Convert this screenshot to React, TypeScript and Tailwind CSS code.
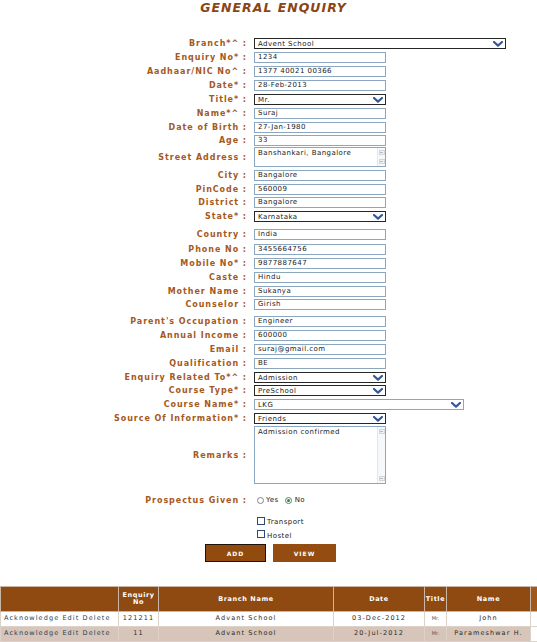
import React from 'react';

const labelCls = 'w-[247px] shrink-0 text-right text-[8px] font-bold text-[#a5591b] leading-[11px] tracking-[0.95px]';
const font = { fontFamily: '"DejaVu Sans", Verdana, sans-serif' };

function Chevron({ color = '#34589a' }: { color?: string }) {
  return (
    <svg width="10" height="6" viewBox="0 0 10 6" className="shrink-0">
      <path d="M1 1 L5 4.6 L9 1" fill="none" stroke={color} strokeWidth="2.2" strokeLinecap="round" strokeLinejoin="round" />
    </svg>
  );
}

function Row({ label, children, className = '' }: { label: string; children: React.ReactNode; className?: string }) {
  return (
    <div className={`flex items-center ${className}`}>
      <div className={labelCls}>{label} :</div>
      <div className="ml-[7px] flex items-center">{children}</div>
    </div>
  );
}

function TextBox({ value, w = 'w-[132px]' }: { value: string; w?: string }) {
  return (
    <div className={`${w} h-[11px] border border-[#8aa6c1] bg-white px-[3px] text-[7px] leading-[9px] tracking-[0.45px] text-[#222] whitespace-nowrap overflow-hidden`}>
      {value}
    </div>
  );
}

function SelectBox({ value, w = 'w-[132px]', light = false }: { value: string; w?: string; light?: boolean }) {
  return (
    <div
      className={`${w} h-[11px] flex items-center justify-between bg-white pl-[3px] pr-[2px] text-[7px] leading-[8px] tracking-[0.45px] text-[#222] ${
        light ? 'border border-[#8aa6c1]' : 'border-[1.5px] border-[#262626]'
      }`}
    >
      <span>{value}</span>
      <Chevron />
    </div>
  );
}

function Scrollbar() {
  return (
    <div className="w-[8px] h-full flex flex-col justify-between items-center py-[2px] border-l border-[#e4e8ee] bg-[#f7f8fa]">
      <div className="w-[6px] h-[5px] border border-[#cfd6de] bg-[#eef1f5] flex items-center justify-center">
        <div className="w-[3px] h-[1px] bg-[#b4bcc6]" />
      </div>
      <div className="w-[6px] h-[5px] border border-[#cfd6de] bg-[#eef1f5] flex items-center justify-center">
        <div className="w-[3px] h-[1px] bg-[#b4bcc6]" />
      </div>
    </div>
  );
}

function TextArea({ value, h }: { value: string; h: string }) {
  return (
    <div className={`w-[132px] ${h} border border-[#8aa6c1] bg-white flex`}>
      <div className="flex-1 px-[3px] pt-[1px] text-[7px] leading-[9px] tracking-[0.45px] text-[#222] whitespace-nowrap overflow-hidden">{value}</div>
      <Scrollbar />
    </div>
  );
}

const headers = [
  { t: '', w: 'w-[118px]' },
  { t: 'Enquiry No', w: 'w-[40px]' },
  { t: 'Branch Name', w: 'w-[175px]' },
  { t: 'Date', w: 'w-[91px]' },
  { t: 'Title', w: 'w-[22px]' },
  { t: 'Name', w: 'w-[84px]' },
  { t: '', w: 'w-[7px]' },
];

const rows = [
  { no: '121211', branch: 'Advant School', date: '03-Dec-2012', title: 'Mr.', name: 'John', bg: 'bg-white' },
  { no: '11', branch: 'Advant School', date: '20-Jul-2012', title: 'Mr.', name: 'Parameshwar H.', bg: 'bg-[#d6c5b8]' },
];

const cell = 'p-0 border border-[#ddd2c8] text-center text-[#2a2a2a] whitespace-nowrap overflow-hidden';

export default function App() {
  return (
    <div className="w-[537px] h-[642px] bg-white overflow-hidden" style={font}>
      <h1 className="pl-[10px] pt-[1px] text-center text-[12.5px] leading-[13px] font-bold italic tracking-[1px] text-[#8b4513]">
        GENERAL ENQUIRY
      </h1>

      <div className="mt-[24px] flex flex-col gap-[3px]">
        <Row label="Branch*^">
          <SelectBox value="Advent School" w="w-[252px]" />
        </Row>
        <Row label="Enquiry No*">
          <TextBox value="1234" />
        </Row>
        <Row label="Aadhaar/NIC No^">
          <TextBox value="1377 40021 00366" />
        </Row>
        <Row label="Date*">
          <TextBox value="28-Feb-2013" />
        </Row>
        <Row label="Title*">
          <SelectBox value="Mr." />
        </Row>
        <Row label="Name*^">
          <TextBox value="Suraj" />
        </Row>
        <Row label="Date of Birth">
          <TextBox value="27-Jan-1980" />
        </Row>
        <Row label="Age" className="-mt-[1px]">
          <TextBox value="33" />
        </Row>
        <Row label="Street Address" className="-mt-[2px]">
          <TextArea value="Banshankari,  Bangalore" h="h-[20px]" />
        </Row>
        <Row label="City">
          <TextBox value="Bangalore" />
        </Row>
        <Row label="PinCode">
          <TextBox value="560009" />
        </Row>
        <Row label="District" className="-mt-[1px]">
          <TextBox value="Bangalore" />
        </Row>
        <Row label="State*">
          <SelectBox value="Karnataka" />
        </Row>
        <Row label="Country" className="mt-[4px]">
          <TextBox value="India" />
        </Row>
        <Row label="Phone No" className="mt-[1px]">
          <TextBox value="3455664756" />
        </Row>
        <Row label="Mobile No*">
          <TextBox value="9877887647" />
        </Row>
        <Row label="Caste">
          <TextBox value="Hindu" />
        </Row>
        <Row label="Mother Name">
          <TextBox value="Sukanya" />
        </Row>
        <Row label="Counselor" className="-mt-[1px]">
          <TextBox value="Girish" />
        </Row>
        <Row label="Parent's Occupation" className="mt-[3px]">
          <TextBox value="Engineer" />
        </Row>
        <Row label="Annual Income">
          <TextBox value="600000" />
        </Row>
        <Row label="Email">
          <TextBox value="suraj@gmail.com" />
        </Row>
        <Row label="Qualification">
          <TextBox value="BE" />
        </Row>
        <Row label="Enquiry Related To*^">
          <SelectBox value="Admission" />
        </Row>
        <Row label="Course Type*" className="-mt-[1px]">
          <SelectBox value="PreSchool" />
        </Row>
        <Row label="Course Name*">
          <SelectBox value="LKG" w="w-[210px]" light />
        </Row>
        <Row label="Source Of Information*">
          <SelectBox value="Friends" />
        </Row>
        <Row label="Remarks" className="-mt-[1px]">
          <TextArea value="Admission confirmed" h="h-[58px]" />
        </Row>
        <Row label="Prospectus Given" className="mt-[8px]">
          <div className="flex items-center text-[7px] leading-[9px] tracking-[0.45px] text-[#222] ml-[3px]">
            <span className="w-[7px] h-[7px] rounded-full border border-[#7a8594] bg-white" />
            <span className="ml-[2px]">Yes</span>
            <span className="ml-[6px] w-[7px] h-[7px] rounded-full border border-[#4c8a5a] bg-white flex items-center justify-center">
              <span className="w-[3px] h-[3px] rounded-full bg-[#2f8a3e]" />
            </span>
            <span className="ml-[3px]">No</span>
          </div>
        </Row>
        <div className="mt-[8px] ml-[257px] flex flex-col gap-[5px]">
          <div className="flex items-end text-[7px] leading-[8px] tracking-[0.45px] text-[#222]">
            <span className="w-[8px] h-[8px] border border-[#2c4a74] bg-white" />
            <span className="ml-[2px] translate-y-[1px]">Transport</span>
          </div>
          <div className="flex items-end text-[7px] leading-[8px] tracking-[0.45px] text-[#222]">
            <span className="w-[8px] h-[8px] border border-[#2c4a74] bg-white" />
            <span className="ml-[2px] translate-y-[2px]">Hostel</span>
          </div>
        </div>
        <div className="mt-[3px] ml-[205px] flex gap-[7px]">
          <button className="w-[61px] h-[18px] bg-[#924b0f] border-[1.5px] border-[#1e1208] text-white text-[6px] font-bold tracking-[1px]">
            ADD
          </button>
          <button className="w-[63px] h-[18px] bg-[#944c10] text-white text-[6px] font-bold tracking-[1px]">
            VIEW
          </button>
        </div>
      </div>

      <table className="mt-[24px] w-[537px] border-collapse text-[6.5px] tracking-[1.1px] table-fixed">
        <colgroup>
          {headers.map((h, i) => (
            <col key={i} className={h.w} />
          ))}
        </colgroup>
        <thead>
          <tr className="bg-[#8e4a10] text-white">
            {headers.map((h, i) => (
              <th
                key={i}
                className={`h-[25px] p-0 border border-[#c9b6a6] font-bold text-center leading-[7px] tracking-[0.6px] ${i === 6 ? 'bg-[#a0581c]' : ''}`}
              >
                {h.t}
              </th>
            ))}
          </tr>
        </thead>
        <tbody>
          {rows.map((r, i) => (
            <tr key={i} className={`${r.bg} h-[15px]`}>
              <td className="p-0 border border-[#ddd2c8] pl-[3px] text-left text-[#23405a] whitespace-nowrap overflow-hidden">Acknowledge Edit Delete</td>
              <td className={cell}>{r.no}</td>
              <td className={cell}>{r.branch}</td>
              <td className={cell}>{r.date}</td>
              <td className={`${cell} text-[5px] tracking-normal text-[#555]`}>{r.title}</td>
              <td className={cell}>{r.name}</td>
              <td className="p-0 border border-[#ddd2c8] bg-white" />
            </tr>
          ))}
        </tbody>
      </table>
    </div>
  );
}
